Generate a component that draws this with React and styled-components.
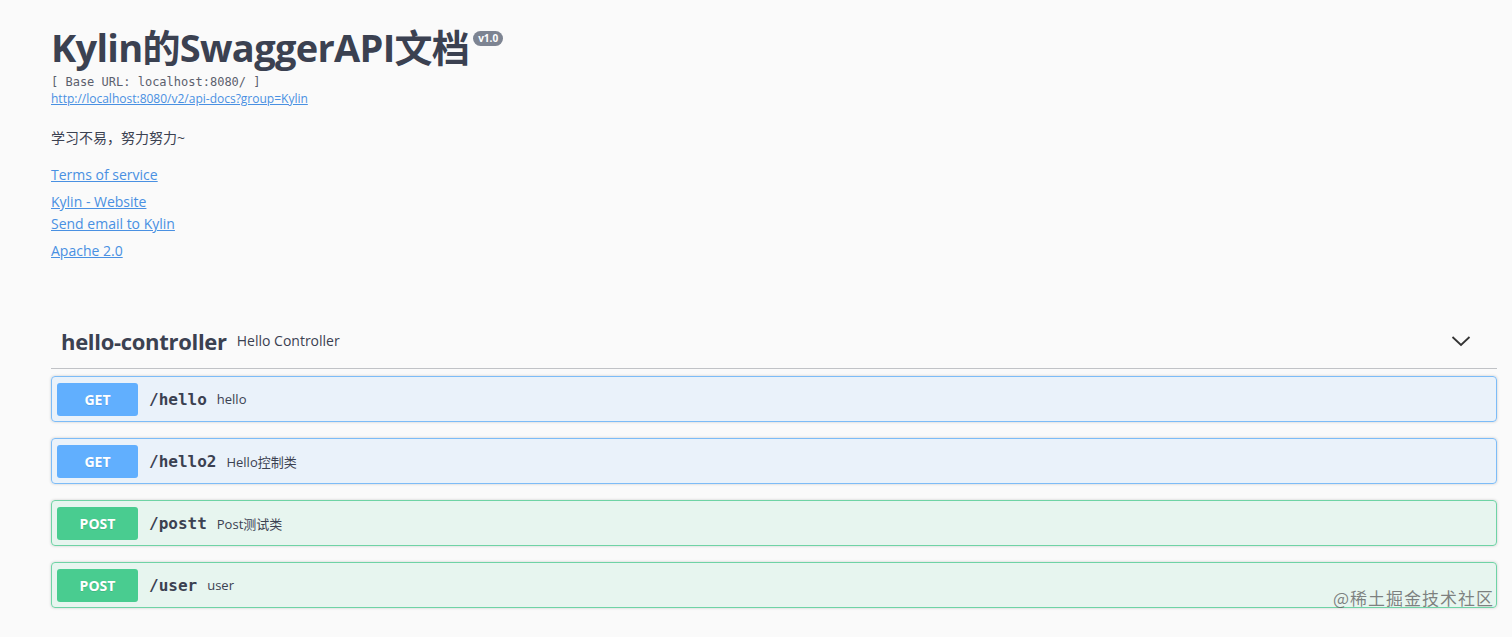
import styled, { createGlobalStyle } from "styled-components";

const GlobalStyle = createGlobalStyle`
  html, body {
    margin: 0;
    padding: 0;
    background: #fafafa;
  }
  body {
    font-family: "Open Sans", "Noto Sans CJK SC", sans-serif;
    color: #3b4151;
  }
`;

const Page = styled.div`
  min-height: 637px;
  padding: 22px 15px 0 51px;
  box-sizing: border-box;
  position: relative;
  overflow: hidden;
`;

const Info = styled.div`
  display: flex;
  flex-direction: column;
  align-items: flex-start;
`;

const TitleRow = styled.div`
  display: flex;
  align-items: flex-start;
  gap: 4px;
`;

const Title = styled.h2`
  margin: 0;
  font-size: 38px;
  line-height: 50px;
  letter-spacing: -0.7px;
  font-weight: 700;
  color: #3b4151;
  font-family: "Open Sans", "Noto Sans CJK SC", sans-serif;
`;

const Version = styled.span`
  margin-top: 9px;
  background: #7d8492;
  color: #fff;
  font-size: 10px;
  font-weight: 700;
  line-height: 15px;
  padding: 0 5px;
  border-radius: 57px;
`;

const BaseUrl = styled.pre`
  margin: 2px 0 0;
  font-family: "DejaVu Sans Mono", monospace;
  font-size: 12px;
  line-height: 16px;
  color: #5b606d;
`;

const Link = styled.a`
  color: #4990e2;
  text-decoration: underline;
  font-size: ${(p) => (p.$small ? "12px" : "14px")};
  line-height: ${(p) => (p.$small ? "18px" : "22px")};
  margin-top: ${(p) => p.$mt || 0}px;
`;

const Description = styled.p`
  margin: 20px 0 16px;
  font-size: 14px;
  line-height: 20px;
  color: #3b4151;
`;

const Section = styled.div`
  margin-top: 51px;
`;

const TagHeader = styled.div`
  display: flex;
  align-items: center;
  padding: 10px 26px 10px 10px;
  height: 35px;
  border-bottom: 1px solid rgba(59, 65, 81, 0.3);
  margin-bottom: 7px;
`;

const TagName = styled.span`
  font-size: 22px;
  letter-spacing: -0.3px;
  font-weight: 700;
  color: #3b4151;
`;

const TagDesc = styled.small`
  font-size: 14px;
  margin-left: 10px;
  flex: 1;
  color: #3b4151;
`;

const Chevron = styled.svg`
  width: 20px;
  height: 20px;
`;

const OpBlock = styled.div`
  display: flex;
  align-items: center;
  height: 44px;
  padding: 0 5px;
  margin-bottom: 16px;
  border-radius: 4px;
  border: 1px solid ${(p) => (p.$method === "GET" ? "#7dbcf7" : "#6fd3a5")};
  background: ${(p) =>
    p.$method === "GET" ? "rgba(97, 175, 254, 0.1)" : "rgba(73, 204, 144, 0.1)"};
  box-shadow: 0 0 3px rgba(0, 0, 0, 0.19);
`;

const Method = styled.span`
  width: 81px;
  height: 33px;
  display: flex;
  align-items: center;
  justify-content: center;
  border-radius: 3px;
  color: #fff;
  font-size: 14px;
  font-weight: 700;
  background: ${(p) => (p.$method === "GET" ? "#61affe" : "#49cc90")};
  text-shadow: 0 1px 0 rgba(0, 0, 0, 0.1);
`;

const Path = styled.span`
  font-family: "DejaVu Sans Mono", monospace;
  font-size: 16px;
  font-weight: 700;
  color: #3b4151;
  margin-left: 11px;
`;

const OpSummary = styled.span`
  font-size: 13px;
  color: #3b4151;
  margin-left: 10px;
`;

const Watermark = styled.div`
  position: absolute;
  right: 18px;
  bottom: 27px;
  font-size: 17px;
  color: rgba(90, 90, 90, 0.75);
  font-family: "Noto Sans CJK SC", sans-serif;
  letter-spacing: 1px;
`;

const ops = [
  { method: "GET", path: "/hello", summary: "hello" },
  { method: "GET", path: "/hello2", summary: "Hello控制类" },
  { method: "POST", path: "/postt", summary: "Post测试类" },
  { method: "POST", path: "/user", summary: "user" },
];

export default function App() {
  return (
    <Page>
      <GlobalStyle />
      <Info>
        <TitleRow>
          <Title>Kylin的SwaggerAPI文档</Title>
          <Version>v1.0</Version>
        </TitleRow>
        <BaseUrl>[ Base URL: localhost:8080/ ]</BaseUrl>
        <Link $small href="#">http://localhost:8080/v2/api-docs?group=Kylin</Link>
        <Description>学习不易，努力努力~</Description>
        <Link href="#">Terms of service</Link>
        <Link href="#" $mt={5}>Kylin - Website</Link>
        <Link href="#">Send email to Kylin</Link>
        <Link href="#" $mt={5}>Apache 2.0</Link>
      </Info>
      <Section>
        <TagHeader>
          <TagName>hello-controller</TagName>
          <TagDesc>Hello Controller</TagDesc>
          <Chevron viewBox="0 0 20 20">
            <path d="M1.5 6 L10 14 L18.5 6" fill="none" stroke="#333" strokeWidth="1.8" />
          </Chevron>
        </TagHeader>
        {ops.map((op) => (
          <OpBlock key={op.path} $method={op.method}>
            <Method $method={op.method}>{op.method}</Method>
            <Path>{op.path}</Path>
            <OpSummary>{op.summary}</OpSummary>
          </OpBlock>
        ))}
      </Section>
      <Watermark>@稀土掘金技术社区</Watermark>
    </Page>
  );
}
